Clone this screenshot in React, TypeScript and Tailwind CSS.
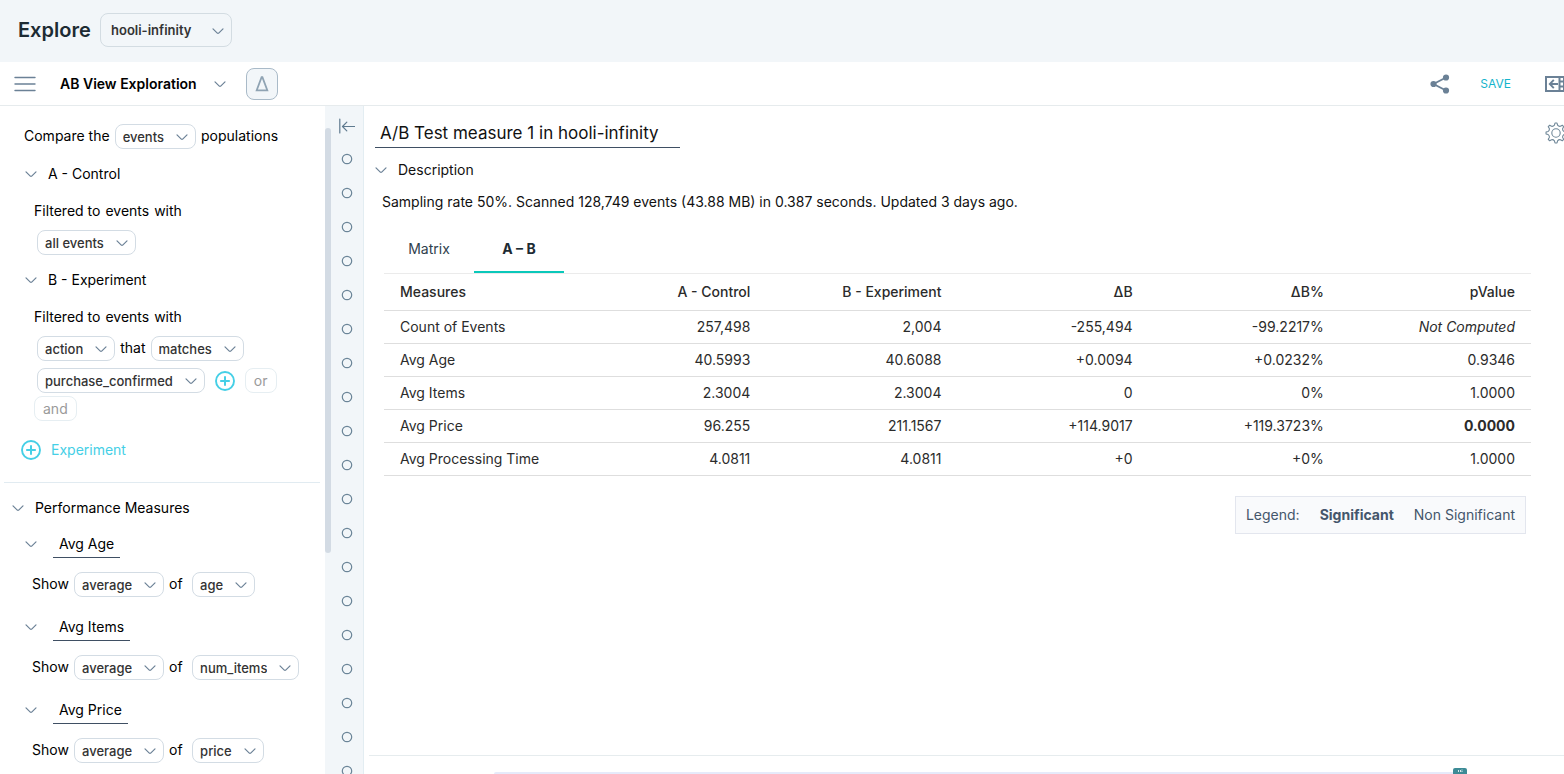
import React from "react";

function Chevron({ className = "" }: { className?: string }) {
  return (
    <svg viewBox="0 0 12 12" className={`h-3 w-3 shrink-0 ${className}`} fill="none" stroke="#6b8196" strokeWidth="1.2" strokeLinecap="round" strokeLinejoin="round" aria-hidden="true">
      <path d="M1 3.8 L5.3 8.1 Q6 8.7 6.7 8.1 L11 3.8" />
    </svg>
  );
}

function PlusCircle() {
  return (
    <svg viewBox="0 0 20 20" className="h-5 w-5 shrink-0" fill="none" stroke="#45cfe6" strokeWidth="2" aria-hidden="true">
      <circle cx="10" cy="10" r="9" strokeWidth="1.9" />
      <path d="M10 5.2v9.6M5.2 10h9.6" />
    </svg>
  );
}

function Pill({ label, value }: { label: string; value: string }) {
  return (
    <span className="inline-grid h-[25px] shrink-0 items-center">
      <select
        aria-label={label}
        defaultValue={value}
        className="col-start-1 row-start-1 field-sizing-content h-[25px] appearance-none rounded-lg border border-[#d3dce4] bg-white pr-[31px] pl-[7px] text-[13px] leading-5 font-medium text-[#333]"
      >
        <option>{value}</option>
      </select>
      <Chevron className="pointer-events-none col-start-1 row-start-1 mt-px mr-2 justify-self-end" />
    </span>
  );
}

function Collapse({ label }: { label: string }) {
  return (
    <button aria-label={`Collapse ${label}`} className="flex h-6 w-3 items-center">
      <Chevron />
    </button>
  );
}

function Population({ name }: { name: string }) {
  return (
    <>
      <div className="mt-[13px] flex h-6 items-center gap-[11px] pl-[25px]">
        <Collapse label={name} />
        <span>{name}</span>
      </div>
      <div className="mt-[13px] flex h-6 items-center gap-[5px] pl-[34px]">
        <span>Filtered to</span>
        <span>events</span>
        <span>with</span>
      </div>
    </>
  );
}

function Measure({ name, field }: { name: string; field: string }) {
  return (
    <section className="mb-[18px]">
      <div className="flex h-[26px] items-start pl-[25px]">
        <Collapse label={name} />
        <input
          aria-label="Measure name"
          defaultValue={name}
          className="ml-4 field-sizing-content h-[26px] border-b border-[#3f4f63] px-1.5 pb-0.5"
        />
      </div>
      <div className="mt-[14px] flex h-[25px] items-start pl-8">
        <span className="w-[42px]">Show</span>
        <Pill label="Aggregation" value="average" />
        <span className="w-7 pl-[5px]">of</span>
        <Pill label="Field" value={field} />
      </div>
    </section>
  );
}

function Sidebar() {
  return (
    <aside className="w-[325px] shrink-0 overflow-hidden pt-[18px] leading-6">
      <div className="flex h-[25px] items-start gap-[5px] pl-6">
        <span>Compare the</span>
        <Pill label="Population type" value="events" />
        <span>populations</span>
      </div>

      <Population name="A - Control" />
      <div className="mt-[7px] flex h-[25px] pl-[37px]">
        <Pill label="Control filter" value="all events" />
      </div>

      <Population name="B - Experiment" />
      <div className="mt-[7px] flex h-[25px] items-start gap-[5px] pl-[37px]">
        <Pill label="Filter property" value="action" />
        <span>that</span>
        <Pill label="Filter operator" value="matches" />
      </div>
      <div className="mt-[7px] flex h-[25px] items-center gap-2.5 pl-[37px]">
        <Pill label="Filter value" value="purchase_confirmed" />
        <button aria-label="Add value">
          <PlusCircle />
        </button>
        <button className="h-[25px] rounded-lg border border-[#e6eef2] px-2 leading-[22px] text-[#9a9a9a]">or</button>
      </div>
      <div className="mt-[3px] flex h-[25px] pl-[34px]">
        <button className="h-[25px] rounded-lg border border-[#e6eef2] px-2 text-[#9a9a9a]">and</button>
      </div>

      <button className="mt-[17px] ml-[21px] flex h-6 items-center gap-2.5 text-[#45cfe6]">
        <PlusCircle />
        Experiment
      </button>

      <hr className="mt-5 mr-[5px] ml-1 border-[#e1ebf1]" />

      <div className="mt-[13px] mb-3 flex h-6 items-center gap-[11px] pl-3">
        <Collapse label="Performance Measures" />
        <span>Performance Measures</span>
      </div>
      <Measure name="Avg Age" field="age" />
      <Measure name="Avg Items" field="num_items" />
      <Measure name="Avg Price" field="price" />
    </aside>
  );
}

const steps = Array.from({ length: 19 }, (_, i) => i + 1);

function Rail() {
  return (
    <div className="flex w-[39px] shrink-0 border-r border-[#e3edf2] bg-[#f2f6f9]">
      <div className="w-1.5 pt-[22px]">
        <div className="h-[425px] rounded-[3px] bg-[#d3dbe4]" />
      </div>
      <div className="flex flex-1 flex-col items-center overflow-hidden pt-3">
        <button aria-label="Collapse panel">
          <svg viewBox="0 0 16 16" className="h-4 w-4" fill="none" stroke="#5f7a8f" strokeWidth="1.2" strokeLinecap="round" strokeLinejoin="round">
            <path d="M0.8 1v14M3.5 8.5H15.5M7.8 4.2L3.5 8.5l4.3 4.3" />
          </svg>
        </button>
        <ol className="mt-2">
          {steps.map((step) => (
            <li key={step} className="flex h-[34px] items-center">
              <button aria-label={`Go to query ${step}`} className="block">
                <svg viewBox="0 0 12 12" className="block h-3 w-3" fill="none" stroke="#6b8598" strokeWidth="1.2">
                  <circle cx="6" cy="6" r="4.7" />
                </svg>
              </button>
            </li>
          ))}
        </ol>
      </div>
    </div>
  );
}

const columns = ["A - Control", "B - Experiment", "ΔB", "ΔB%", "pValue"];
const rows: { name: string; values: string[]; style?: string }[] = [
  { name: "Count of Events", values: ["257,498", "2,004", "-255,494", "-99.2217%", "Not Computed"], style: "italic" },
  { name: "Avg Age", values: ["40.5993", "40.6088", "+0.0094", "+0.0232%", "0.9346"] },
  { name: "Avg Items", values: ["2.3004", "2.3004", "0", "0%", "1.0000"] },
  { name: "Avg Price", values: ["96.255", "211.1567", "+114.9017", "+119.3723%", "0.0000"], style: "font-bold" },
  { name: "Avg Processing Time", values: ["4.0811", "4.0811", "+0", "+0%", "1.0000"] },
];

function Results() {
  return (
    <table className="w-full table-fixed border-separate border-spacing-0 text-right text-[#2b2b2b]">
      <thead>
        <tr className="h-[37px]">
          <th className="border-b border-[#dedede] px-4 text-left font-medium">Measures</th>
          {columns.map((column) => (
            <th key={column} className="border-b border-[#dedede] px-4 font-medium">{column}</th>
          ))}
        </tr>
      </thead>
      <tbody>
        {rows.map((row) => (
          <tr key={row.name} className="h-[33px]">
            <th className="border-b border-[#dedede] px-4 text-left font-normal">{row.name}</th>
            {row.values.map((value, i) => (
              <td key={i} className={`border-b border-[#dedede] px-4 ${i === 4 && row.style ? row.style : ""}`}>{value}</td>
            ))}
          </tr>
        ))}
      </tbody>
    </table>
  );
}

function gearOutline() {
  const teeth = 8;
  const at = (angle: number, radius: number) =>
    `${(11 + radius * Math.sin(angle)).toFixed(2)} ${(11 - radius * Math.cos(angle)).toFixed(2)}`;
  let d = "";
  for (let i = 0; i < teeth; i++) {
    const base = (i * 2 * Math.PI) / teeth;
    const half = Math.PI / teeth;
    d += `${i === 0 ? "M" : "L"}${at(base - 0.1, 10)}L${at(base + 0.1, 10)}`;
    d += `L${at(base + 0.2, 8)}Q${at(base + half, 6.9)} ${at(base + 2 * half - 0.2, 8)}`;
  }
  return `${d}Z`;
}

function Gear() {
  return (
    <svg viewBox="0 0 22 22" className="h-[22px] w-[22px]" fill="none" stroke="#6f8798" strokeWidth="1.1" strokeLinejoin="round">
      <path d={gearOutline()} />
      <circle cx="11" cy="11" r="4.2" />
    </svg>
  );
}

function Content() {
  return (
    <main className="flex min-w-0 flex-1 flex-col">
      <div className="flex flex-1 flex-col pr-[33px] pl-5">
        <div className="mt-3 -mr-9 -ml-[9px] flex h-[30px] items-center justify-between">
          <input
            aria-label="Query title"
            defaultValue="A/B Test measure 1 in hooli-infinity"
            className="h-[30px] w-[305px] border-b border-[#3f4f63] px-[5px] text-[17px] text-[#111]"
          />
          <button aria-label="Settings" className="shrink-0">
            <Gear />
          </button>
        </div>
        <div className="mt-[10px] -ml-[9px] flex h-6 items-center gap-[11px] text-[#111]">
          <Collapse label="Description" />
          <span>Description</span>
        </div>
        <p className="mt-2 -ml-0.5 h-6 leading-6 text-[#111]">
          Sampling rate 50%. Scanned 128,749 events (43.88 MB) in 0.387 seconds. Updated 3 days ago.
        </p>
        <div role="tablist" className="mt-3 flex h-12 border-b border-[#ebebeb]">
          <button role="tab" aria-selected="false" className="h-[47px] w-[90px] border-b-2 border-transparent text-[#30414d]">Matrix</button>
          <button role="tab" aria-selected="true" className="h-[47px] w-[90px] border-b-2 border-[#0ac8ba] font-bold text-[#1d2b33]">A – B</button>
        </div>
        <Results />
        <div className="mt-5 mr-[5px] flex h-[38px] items-center gap-5 self-end border border-[#e3e6ee] bg-[#f9fafc] px-2.5 text-[#44566b]">
          <span>Legend:</span>
          <strong className="font-bold">Significant</strong>
          <span>Non Significant</span>
        </div>
      </div>
      <div className="ml-[5px] h-[19px] shrink-0 border-t border-[#e6ecee]">
        <div className="mt-3 mr-[97px] ml-[125px] flex h-1.5 flex-col items-end">
          <span className="h-1.5 w-3.5 shrink-0 rounded-t-xs bg-[#3d8b96]" aria-hidden="true">
            <svg viewBox="0 0 14 6" className="h-1.5 w-3.5" fill="#d8ebee">
              <path d="M5 2h1v2H5zM7 2h1v2H7zM8.5 1.5h1v1h-1zM8.5 3h1v1h-1z" />
            </svg>
          </span>
          <span className="-mt-0.5 mr-3.5 h-0.5 self-stretch rounded-tl bg-[#e6eafa]" />
        </div>
      </div>
    </main>
  );
}

export default function App() {
  return (
    <div className="flex h-screen flex-col overflow-hidden bg-white font-['Inter',sans-serif] text-sm text-black">
      <header className="flex h-[62px] shrink-0 items-center gap-2 bg-[#f2f6f9] pb-0.5 pl-[18px]">
        <h1 className="w-[74px] text-[20px] font-semibold text-[#1d2b33]">Explore</h1>
        <span className="inline-grid items-center">
          <select
            aria-label="Dataset"
            defaultValue="hooli-infinity"
            className="col-start-1 row-start-1 h-[34px] w-[132px] appearance-none rounded-lg border border-[#d3dce2] bg-transparent pl-2.5 text-[13px] font-semibold text-[#333]"
          >
            <option>hooli-infinity</option>
          </select>
          <Chevron className="pointer-events-none col-start-1 row-start-1 mt-0.5 mr-2 justify-self-end" />
        </span>
      </header>

      <nav className="flex h-11 shrink-0 items-center border-b border-[#e6ebed] pl-[14px]">
        <button aria-label="Menu">
          <svg viewBox="0 0 22 16" className="h-4 w-[22px]" fill="none" stroke="#6b8196" strokeWidth="1.4" strokeLinecap="round">
            <path d="M1 1.5h20M1 8h20M1 14.5h20" />
          </svg>
        </button>
        <button className="ml-6 flex items-center gap-[17px] font-semibold">
          AB View Exploration
          <Chevron />
        </button>
        <button aria-label="Delta view" className="ml-5 flex h-8 w-8 items-center justify-center rounded-lg border border-[#a9bac8] bg-[#f2f6f9]">
          <svg viewBox="0 0 14 16" className="h-4 w-3.5" fill="none" stroke="#8fa3b3" strokeWidth="1.8">
            <path d="M6.6 1.2h0.8L12.3 14.3H1.7z" />
          </svg>
        </button>
        <div className="-mr-1.5 ml-auto flex items-center">
          <button aria-label="Share">
            <svg viewBox="0 0 20 20" className="h-5 w-5" fill="#6b8196" stroke="#6b8196" strokeWidth="1.8">
              <path d="M16 3.5L3.5 10L16 16.5" fill="none" />
              <circle cx="16" cy="3.5" r="2.2" />
              <circle cx="3.5" cy="10" r="2.2" />
              <circle cx="16" cy="16.5" r="2.2" />
            </svg>
          </button>
          <button className="ml-[30px] text-xs text-[#15b4cc]">SAVE</button>
          <button aria-label="Open side panel" className="ml-[34px]">
            <svg viewBox="0 0 25 16" className="h-4 w-[25px]" fill="none" stroke="#6b8196" strokeWidth="2">
              <path d="M1 1h22v14H1zM14.5 1v14M19 1v14" />
              <path d="M14.5 5.5H19M14.5 10.5H19" />
              <path d="M4.6 8H13M8.8 3.8L4.8 8l4 4.2" strokeWidth="1.9" />
            </svg>
          </button>
        </div>
      </nav>

      <div className="flex min-h-0 flex-1">
        <Sidebar />
        <Rail />
        <Content />
      </div>
    </div>
  );
}
